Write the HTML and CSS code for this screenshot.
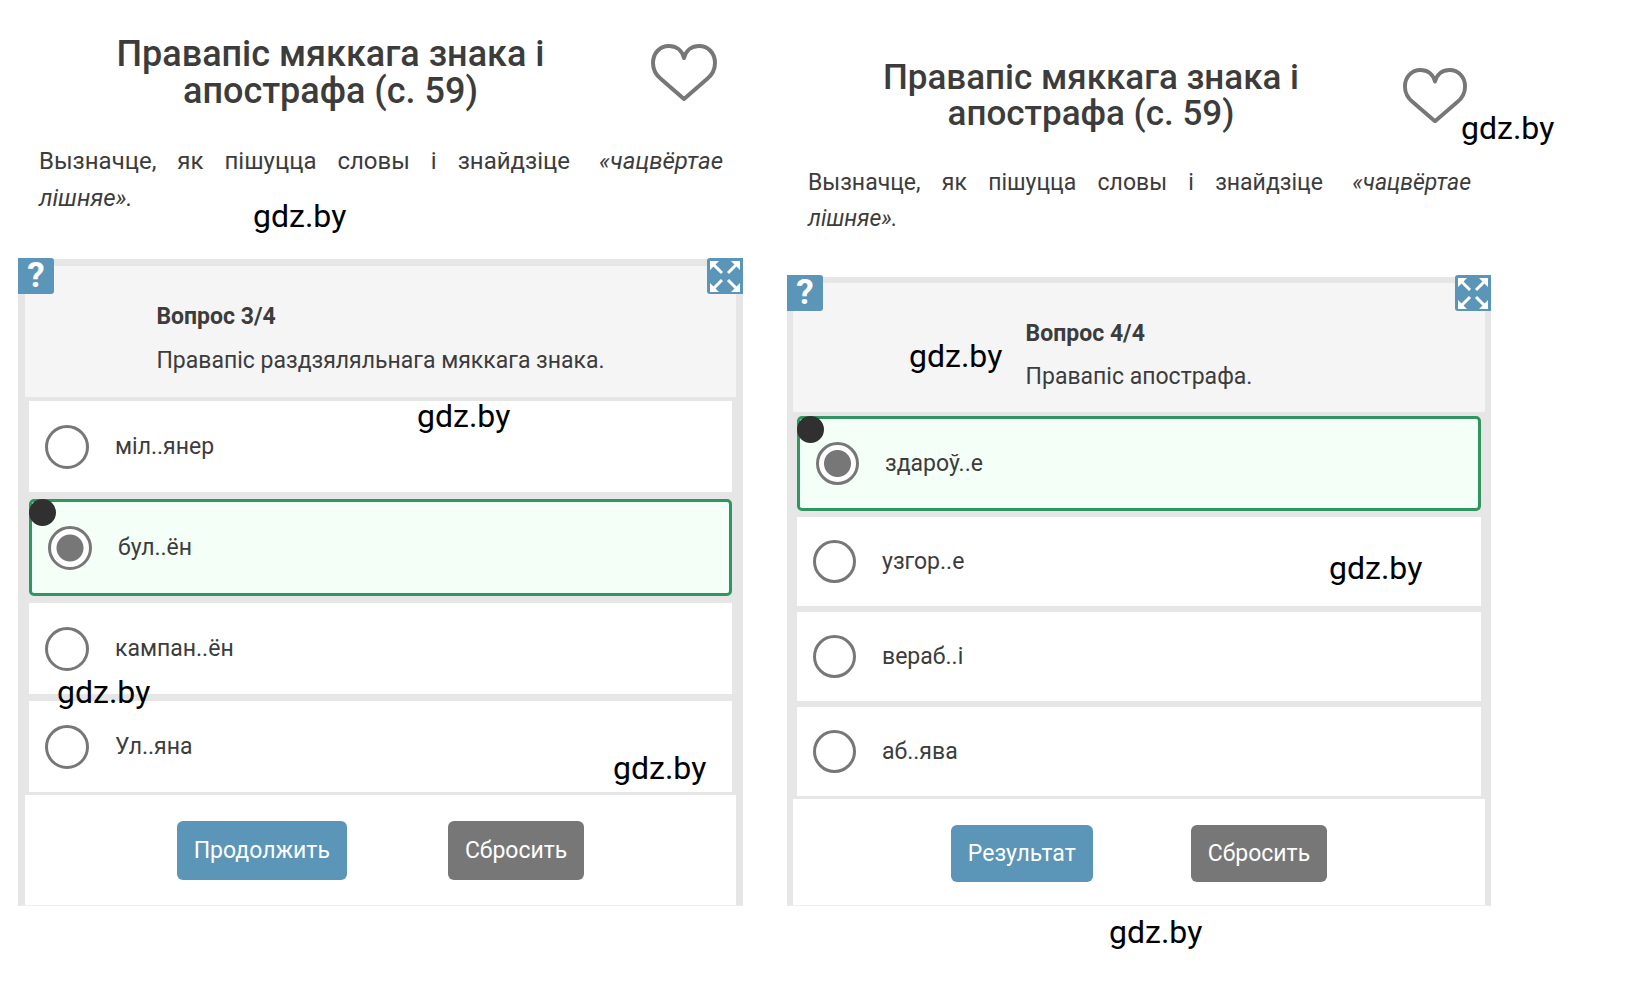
FILE: index.html
```html
<!DOCTYPE html>
<html lang="be">
<head>
    <meta charset="UTF-8">
    <meta name="viewport" content="width=device-width, initial-scale=1">
    <title>Правапіс мяккага знака і апострафа</title>
    <link rel="stylesheet" href="styles.css">
</head>
<body>
    <main class="page">
        <section class="panel">
            <header class="panel-header">
                <h1 class="title">Правапіс мяккага знака і апострафа (с. 59)</h1>
                <button type="button" class="like" aria-label="Like">
                    <svg viewBox="0 0 66 57"><path d="M33 14C31 6 25 2 18 2C9 2 2 9 2 19C2 26 5 31 10 35L33 55L56 35C61 31 64 26 64 19C64 9 57 2 48 2C41 2 35 6 33 14Z"/></svg>
                </button>
            </header>
            <p class="intro">Вызначце, як пішуцца словы і знайдзіце <em>«чацвёртае</em> <i>лішняе».</i></p>

            <form class="quiz">
                <button type="button" class="corner help">?</button>
                <button type="button" class="corner expand" aria-label="Fullscreen">
                    <svg viewBox="0 0 36 36">
                        <path class="line" d="M6 6L15 15M30 6L21 15M6 31L15 22M30 31L21 22"/>
                        <path class="head" d="M3 3H12L3 12ZM33 3H24L33 12ZM3 34H12L3 25ZM33 34H24L33 25Z"/>
                    </svg>
                </button>
                <div class="question">
                    <div>
                        <h2>Вопрос 3/4</h2>
                        <p>Правапіс раздзяляльнага мяккага знака.</p>
                    </div>
                </div>
                <div class="answers">
                    <label class="answer"><input type="radio" name="q3">міл..янер</label>
                    <label class="answer selected"><input type="radio" name="q3" checked>бул..ён</label>
                    <label class="answer"><input type="radio" name="q3">кампан..ён</label>
                    <label class="answer"><input type="radio" name="q3">Ул..яна</label>
                </div>
                <div class="actions">
                    <button type="button" class="btn">Продолжить</button>
                    <button type="reset" class="btn btn-grey">Сбросить</button>
                </div>
            </form>
        </section>

        <section class="panel panel-small">
            <header class="panel-header">
                <h1 class="title">Правапіс мяккага знака і апострафа (с. 59)</h1>
                <button type="button" class="like" aria-label="Like">
                    <svg viewBox="0 0 66 57"><path d="M33 14C31 6 25 2 18 2C9 2 2 9 2 19C2 26 5 31 10 35L33 55L56 35C61 31 64 26 64 19C64 9 57 2 48 2C41 2 35 6 33 14Z"/></svg>
                </button>
            </header>
            <p class="intro">Вызначце, як пішуцца словы і знайдзіце <em>«чацвёртае</em> <i>лішняе».</i></p>

            <form class="quiz">
                <button type="button" class="corner help">?</button>
                <button type="button" class="corner expand" aria-label="Fullscreen">
                    <svg viewBox="0 0 36 36">
                        <path class="line" d="M6 6L15 15M30 6L21 15M6 31L15 22M30 31L21 22"/>
                        <path class="head" d="M3 3H12L3 12ZM33 3H24L33 12ZM3 34H12L3 25ZM33 34H24L33 25Z"/>
                    </svg>
                </button>
                <div class="question">
                    <div>
                        <h2>Вопрос 4/4</h2>
                        <p>Правапіс апострафа.</p>
                    </div>
                </div>
                <div class="answers">
                    <label class="answer selected"><input type="radio" name="q4" checked>здароў..е</label>
                    <label class="answer"><input type="radio" name="q4">узгор..е</label>
                    <label class="answer"><input type="radio" name="q4">вераб..і</label>
                    <label class="answer"><input type="radio" name="q4">аб..ява</label>
                </div>
                <div class="actions">
                    <button type="button" class="btn">Результат</button>
                    <button type="reset" class="btn btn-grey">Сбросить</button>
                </div>
            </form>
        </section>

        <!-- watermarks over both panels -->
        <span class="mark mark-1">gdz.by</span>
        <span class="mark mark-2">gdz.by</span>
        <span class="mark mark-3">gdz.by</span>
        <span class="mark mark-4">gdz.by</span>
        <span class="mark mark-5">gdz.by</span>
        <span class="mark mark-6">gdz.by</span>
        <span class="mark mark-7">gdz.by</span>
        <span class="mark mark-8">gdz.by</span>
    </main>
</body>
</html>
```
FILE: styles.css
```css
* {
    box-sizing: border-box;
}
body {
    margin: 0;
    background: #fff;
    color: #3c3c3c;
    font-family: Roboto, "Liberation Sans", sans-serif;
}
h1, h2, p {
    margin: 0;
}
button {
    font-family: inherit;
    border: 0;
    padding: 0;
    cursor: pointer;
}
.page {
    position: relative;
    display: grid;
    grid-template-columns: 725fr 704fr;
    align-items: start;
    gap: 44px;
    min-height: 100vh;
    padding: 0 146px 0 18px;
}

/* panel sizes, the second panel is slightly smaller */
.panel {
    --title: 36px;
    --title-line: 37px;
    --intro: 24px;
    --intro-line: 37px;
    --question-line: 44px;
    --question-height: 131px;
    --row: 91px;
    --row-gap: 7px;
    --radio: 44px;
    --edge: 7px;
    --btn-height: 59px;
    --btn-gap: 101px;
    --actions-height: 110px;
    padding-top: 36px;
}
.panel-small {
    --title: 35px;
    --title-line: 36px;
    --intro: 23px;
    --intro-line: 36px;
    --question-line: 43px;
    --question-height: 129px;
    --row: 89px;
    --row-gap: 6px;
    --radio: 43px;
    --edge: 6px;
    --btn-height: 57px;
    --btn-gap: 98px;
    --actions-height: 106px;
    padding-top: 60px;
}
.panel-header {
    display: flex;
    align-items: flex-start;
}
.title {
    flex: 1;
    padding: 0 60px;
    font-size: var(--title);
    line-height: var(--title-line);
    font-weight: 500;
    text-align: center;
}
.like {
    width: 66px;
    margin: 8px 26px 0 8px;
    background: none;
}
.panel-small .like {
    width: 64px;
    margin-right: 24px;
}
.like svg {
    display: block;
    width: 100%;
    fill: none;
    stroke: #777;
    stroke-width: 4;
    stroke-linejoin: round;
}
.intro {
    margin: 33px 20px 42px 21px;
    font-size: var(--intro);
    line-height: var(--intro-line);
    text-align: justify;
}
.panel-small .intro {
    margin-bottom: 40px;
}
.intro em {
    margin-left: 8px;
}

.quiz {
    position: relative;
    border: var(--edge) solid #e6e6e6;
    border-bottom: 1px solid #eee;
    font-size: 23px;
}
.corner {
    position: absolute;
    top: -8px;
    width: 36px;
    height: 36px;
    background: #5b95b7;
    color: #fff;
}
.help {
    left: calc(0px - var(--edge));
    border-radius: 0 3px 3px 0;
    font-size: 35px;
    line-height: 36px;
    font-weight: 700;
}
.expand {
    right: calc(0px - var(--edge));
    border-radius: 3px 0 0 3px;
}
.expand svg {
    display: block;
}
.expand .line {
    stroke: #fff;
    stroke-width: 3;
}
.expand .head {
    fill: #fff;
}
.question {
    display: flex;
    justify-content: center;
    height: var(--question-height);
    padding-top: 29px;
    background: #f5f5f5;
}
.question h2,
.question p {
    font-size: 23px;
    line-height: var(--question-line);
}
.question h2 {
    font-weight: 700;
}
.answers {
    display: flex;
    flex-direction: column;
    gap: var(--row-gap);
    padding: 4px 4px 3px;
    background: #e6e6e6;
}
.answer {
    position: relative;
    display: flex;
    align-items: center;
    gap: 26px;
    height: var(--row);
    padding-left: 16px;
    background: #fff;
    cursor: pointer;
}
.answer input {
    appearance: none;
    width: var(--radio);
    height: var(--radio);
    margin: 0;
    border: 3px solid #777;
    border-radius: 50%;
    background: #fff;
}
.answer input:checked {
    background: radial-gradient(#777 13px, #fff 14px);
}
.selected {
    height: calc(var(--row) + 6px);
    border: 3px solid #2f965f;
    border-radius: 5px;
    background: #f4fff8;
}
.selected::before {
    content: "";
    position: absolute;
    top: -3px;
    left: -3px;
    width: 27px;
    height: 27px;
    border-radius: 50%;
    background: #303030;
}
.actions {
    display: flex;
    justify-content: center;
    align-items: flex-start;
    gap: var(--btn-gap);
    height: var(--actions-height);
    padding-top: 26px;
    background: #fff;
}
.btn {
    height: var(--btn-height);
    padding: 0 17px;
    border-radius: 6px;
    background: #5b95b7;
    color: #fff;
    font-size: 23px;
}
.btn-grey {
    background: #777;
}

.mark {
    position: absolute;
    color: #000;
    font-size: 32px;
    line-height: 32px;
    pointer-events: none;
}
.mark-1 { left: 253px; top: 200px; }
.mark-2 { left: 417px; top: 400px; }
.mark-3 { left: 57px; top: 676px; }
.mark-4 { left: 613px; top: 752px; }
.mark-5 { left: 1461px; top: 112px; }
.mark-6 { left: 909px; top: 340px; }
.mark-7 { left: 1329px; top: 552px; }
.mark-8 { left: 1109px; top: 916px; }
```
